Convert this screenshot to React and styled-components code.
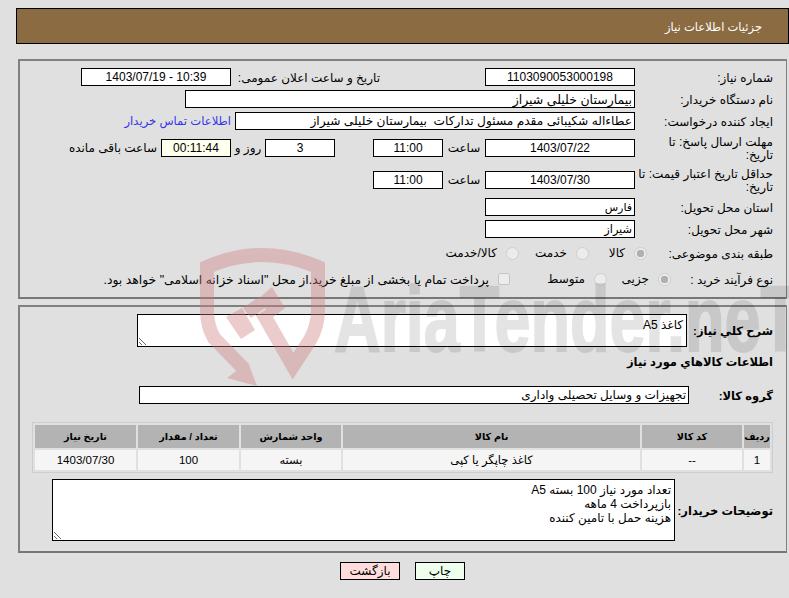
import React from "react"
import styled, { createGlobalStyle } from "styled-components"

const Global = createGlobalStyle`
  html, body {
    margin: 0;
    padding: 0;
    background: #e0e0e0;
  }
  body {
    font-family: "Liberation Sans", "DejaVu Sans", sans-serif;
    font-size: 12px;
    color: #000;
  }
`

const Page = styled.div`
  position: relative;
  width: 789px;
  height: 598px;
  overflow: hidden;
  padding-top: 8px;
  box-sizing: border-box;
  direction: rtl;
`

const Header = styled.div`
  height: 36px;
  margin-left: 16px;
  padding-right: 26px;
  box-sizing: border-box;
  background: #8b6b41;
  border: 1px solid #000;
  color: #fff;
  font-size: 11.5px;
  line-height: 36px;
`

const Panel = styled.div`
  margin: ${(p) => p.$top}px 2px 0 18px;
  height: ${(p) => p.$height}px;
  box-sizing: border-box;
  border: 2px solid #808080;
  border-right-width: 1px;
  border-bottom-color: #777;
  padding: 7px 13px 0 0;
`

const Rows = styled.div`
  display: flex;
  flex-direction: column;
  gap: 4px;
`

const Row = styled.div`
  display: flex;
  align-items: center;
  margin-top: ${(p) => p.$top || 0}px;
  height: ${(p) => p.$height || 18}px;
`

const Label = styled.div`
  width: ${(p) => p.$width || 138}px;
  flex: none;
  line-height: 13px;
  padding-top: 2px;
  white-space: nowrap;
`

const Strong = styled.div`
  width: ${(p) => p.$width}px;
  flex: none;
  padding-top: 1px;
  font-weight: bold;
  font-size: 11.5px;
`

const Field = styled.input`
  width: ${(p) => p.$width || 150}px;
  height: 18px;
  flex: none;
  box-sizing: border-box;
  padding: 0 2px;
  border: 1px solid #000;
  border-radius: 0;
  outline: none;
  background: ${(p) => p.$bg || "#fff"};
  color: #000;
  font: ${(p) => p.$size || 12}px "Liberation Sans", "DejaVu Sans", sans-serif;
  text-align: ${(p) => (p.$center ? "center" : "right")};
  direction: rtl;
`

const Note = styled.div`
  width: ${(p) => p.$width}px;
  flex: none;
  text-align: center;
`

const SecondLabel = styled.div`
  width: 149px;
  margin-right: 105px;
  padding-top: 2px;
  flex: none;
`

const ContactLink = styled.a`
  margin-right: 4px;
  color: #3535e8;
  font-size: 11.6px;
  text-decoration: none;
`

const Remaining = styled.div`
  margin-right: 4px;
  white-space: nowrap;
`

const Gap = styled.div`
  width: ${(p) => p.$width}px;
  flex: none;
`

const Radio = styled.input.attrs({ type: "radio", disabled: true })`
  appearance: none;
  width: 13px;
  height: 13px;
  margin: 0;
  flex: none;
  border-radius: 50%;
  border: 1px solid #cfcfcf;
  background: ${(p) =>
    p.checked ? "radial-gradient(circle, #b0b0b0 0 3.5px, #ececec 4px)" : "#ececec"};
`

const Check = styled.input.attrs({ type: "checkbox", disabled: true })`
  appearance: none;
  width: 12px;
  height: 12px;
  margin: 0 0 0 9px;
  flex: none;
  border-radius: 2px;
  border: 1px solid #c4c4c4;
  background: #ececec;
`

const Option = styled.label`
  display: flex;
  align-items: center;
  width: ${(p) => p.$width}px;
  flex: none;
  gap: ${(p) => p.$gap || 9}px;
  white-space: nowrap;
`

const Terms = styled.div`
  white-space: nowrap;
  font-size: 12.4px;
`

const Area = styled.textarea`
  width: ${(p) => p.$width}px;
  height: ${(p) => p.$height}px;
  flex: none;
  box-sizing: border-box;
  padding: 3px;
  border: 1px solid #000;
  border-radius: 0;
  outline: none;
  background: #fff;
  color: #000;
  font: 12px/14px "Liberation Sans", "DejaVu Sans", sans-serif;
  direction: rtl;
`

const Heading = styled.div`
  margin-top: 8px;
  font-weight: bold;
  font-size: 11.5px;
  line-height: 14px;
`

const Grid = styled.table`
  width: 741px;
  margin-top: 18px;
  box-sizing: border-box;
  border: 1px solid #cdcdcd;
  border-spacing: 2px;
  table-layout: fixed;
`

const Th = styled.th`
  height: 23px;
  padding: 0;
  background: #b3b3b3;
  font-weight: bold;
  font-size: 9.7px;
  width: ${(p) => p.$width}px;
`

const Td = styled.td`
  height: 20px;
  padding: 0;
  background: #f5f5f5;
  text-align: center;
  font-size: 11.5px;
`

const Buttons = styled.div`
  display: flex;
  justify-content: center;
  gap: 15px;
  margin-top: 9px;
  padding-left: 16px;
`

const Button = styled.button`
  width: ${(p) => p.$width}px;
  height: 18px;
  padding: 0;
  border: 1px solid #000;
  border-radius: 0;
  background: ${(p) => p.$bg};
  color: #000;
  font: 12px "Liberation Sans", "DejaVu Sans", sans-serif;
`

const Watermark = styled.svg`
  position: absolute;
  left: 0;
  top: 0;
  direction: ltr;
  pointer-events: none;
`

const columns = [
  ["ردیف", 26],
  ["کد کالا", 100],
  ["نام کالا", 297],
  ["واحد شمارش", 100],
  ["تعداد / مقدار", 101],
  ["تاریخ نیاز", 101],
]

const cells = ["1", "--", "کاغذ چاپگر یا کپی", "بسته", "100", "1403/07/30"]

const App = () => {
  return (
    <Page>
      <Global />
      <Header>جزئیات اطلاعات نیاز</Header>

      <Panel $top={15} $height={240}>
        <Rows>
          <Row>
            <Label>شماره نیاز:</Label>
            <Field $center readOnly value="1103090053000198" />
            <SecondLabel>تاریخ و ساعت اعلان عمومی:</SecondLabel>
            <Field $center readOnly value="10:39 - 1403/07/19" />
          </Row>
          <Row>
            <Label>نام دستگاه خریدار:</Label>
            <Field $width={450} $size={12.5} readOnly value="بیمارستان خلیلی شیراز" />
          </Row>
          <Row>
            <Label>ایجاد کننده درخواست:</Label>
            <Field $width={400} $size={12.2} readOnly value="عطاءاله شکیبائی مقدم مسئول تدارکات  بیمارستان خلیلی شیراز" />
            <ContactLink href="#">اطلاعات تماس خریدار</ContactLink>
          </Row>
          <Row $height={28}>
            <Label>
              مهلت ارسال پاسخ: تا
              <br />
              تاریخ:
            </Label>
            <Field $center readOnly value="1403/07/22" />
            <Note $width={42}>ساعت</Note>
            <Field $center $width={70} readOnly value="11:00" />
            <Gap $width={38} />
            <Field $center $width={70} readOnly value="3" />
            <Note $width={34}>روز و</Note>
            <Field $center $width={70} $bg="#ffffee" readOnly value="00:11:44" />
            <Remaining>ساعت باقی مانده</Remaining>
          </Row>
          <Row $height={28}>
            <Label>
              حداقل تاریخ اعتبار قیمت: تا
              <br />
              تاریخ:
            </Label>
            <Field $center readOnly value="1403/07/30" />
            <Note $width={42}>ساعت</Note>
            <Field $center $width={70} readOnly value="11:00" />
          </Row>
          <Row>
            <Label>استان محل تحویل:</Label>
            <Field $size={11} readOnly value="فارس" />
          </Row>
          <Row>
            <Label>شهر محل تحویل:</Label>
            <Field $size={11.3} readOnly value="شیراز" />
          </Row>
          <Row $height={22}>
            <Label $width={126}>طبقه بندی موضوعی:</Label>
            <Option $width={58}>
              <Radio name="kind" checked readOnly />
              کالا
            </Option>
            <Option $width={70}>
              <Radio name="kind" />
              خدمت
            </Option>
            <Option $width={80}>
              <Radio name="kind" />
              کالا/خدمت
            </Option>
          </Row>
          <Row $height={22}>
            <Label $width={102}>نوع فرآیند خرید :</Label>
            <Option $width={64}>
              <Radio name="mode" checked readOnly />
              جزیی
            </Option>
            <Option $width={97}>
              <Radio name="mode" />
              متوسط
            </Option>
            <Check />
            <Terms>پرداخت تمام یا بخشی از مبلغ خرید.از محل "اسناد خزانه اسلامی" خواهد بود.</Terms>
          </Row>
        </Rows>
      </Panel>

      <Panel $top={6} $height={248}>
        <Row $height={33}>
          <Strong $width={86}>شرح کلي نیاز:</Strong>
          <Area $width={550} $height={33} readOnly value="کاغذ A5" />
        </Row>
        <Heading>اطلاعات کالاهاي مورد نیاز</Heading>
        <Row $top={17}>
          <Strong $width={84}>گروه کالا:</Strong>
          <Field $width={550} readOnly value="تجهیزات و وسایل تحصیلی واداری" />
        </Row>
        <Grid>
          <thead>
            <tr>
              {columns.map(([title, width]) => (
                <Th key={title} $width={width}>
                  {title}
                </Th>
              ))}
            </tr>
          </thead>
          <tbody>
            <tr>
              {cells.map((cell) => (
                <Td key={cell}>{cell}</Td>
              ))}
            </tr>
          </tbody>
        </Grid>
        <Row $top={6} $height={62}>
          <Strong $width={98}>توضیحات خریدار:</Strong>
          <Area
            $width={623}
            $height={62}
            readOnly
            value={"تعداد مورد نیاز 100 بسته A5\nبازپرداخت 4 ماهه\nهزینه حمل با تامین کننده"}
          />
        </Row>
      </Panel>

      <Buttons>
        <Button $width={50} $bg="#eeffee">چاپ</Button>
        <Button $width={60} $bg="#ffdddd">بازگشت</Button>
      </Buttons>

      <Watermark width="789" height="598" viewBox="0 0 789 598">
        <g fill="rgb(206,124,124)" opacity="0.39">
          <path
            d="M243 368 L214 338 Q207 326 207 310 V267 Q262 243 318 267 V310 Q318 326 310 340 L293 366 L262 312"
            fill="none"
            stroke="rgb(206,124,124)"
            strokeWidth="14"
          />
          <polygon points="248,362 257,386 227,378" />
          <polygon points="226,317 242,308 255,330 241,339" />
          <polygon points="258,299 272,287 285,308 272,318" />
          <polygon points="243,308 257,298 265,308 251,318" />
        </g>
        <g opacity="0.1">
          <text
            x="334"
            y="351"
            textLength="466"
            lengthAdjust="spacingAndGlyphs"
            fontFamily="Liberation Sans"
            fontWeight="bold"
            fontSize="92"
            fill="#000"
            stroke="#000"
            strokeWidth="2"
          >
            AriaTender.neT
          </text>
        </g>
      </Watermark>
    </Page>
  )
}

export default App
